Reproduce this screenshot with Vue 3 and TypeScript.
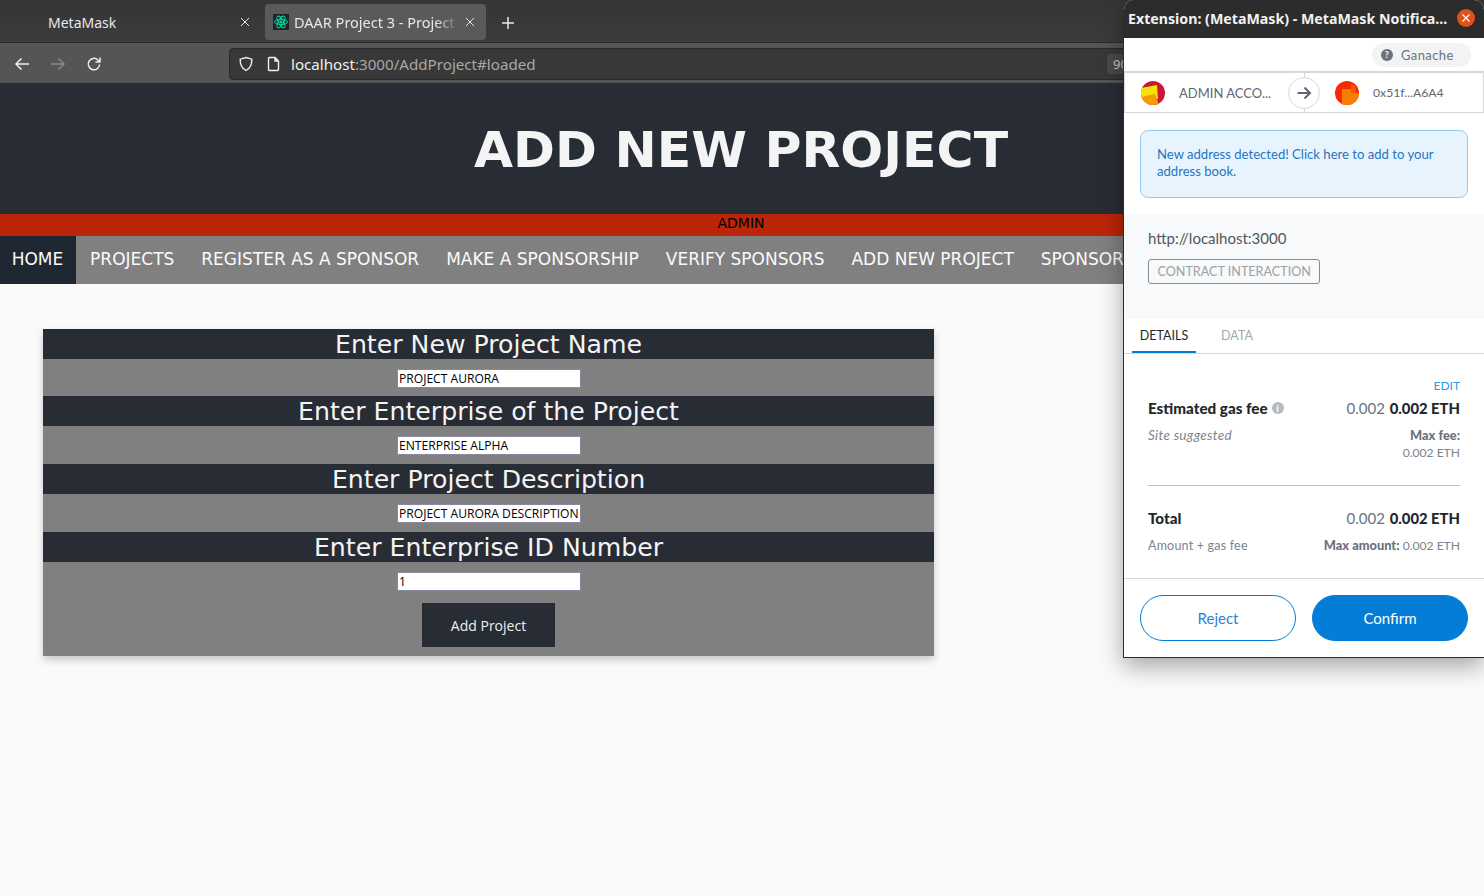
<template>
  <div class="screen">
    <div class="tabbar">
      <div class="tab">
        <span class="tab-title">MetaMask</span>
        <svg class="tab-x" width="10" height="10" viewBox="0 0 10 10"><path d="M1 1l8 8M9 1l-8 8" /></svg>
      </div>
      <div class="tab active">
        <svg class="favicon" width="16" height="16" viewBox="0 0 16 16">
          <rect width="16" height="16" fill="#20232a" />
          <g fill="none" stroke="#00d8a0" stroke-width="1">
            <ellipse cx="8" cy="8" rx="6.5" ry="2.6" />
            <ellipse cx="8" cy="8" rx="6.5" ry="2.6" transform="rotate(60 8 8)" />
            <ellipse cx="8" cy="8" rx="6.5" ry="2.6" transform="rotate(120 8 8)" />
          </g>
          <circle cx="8" cy="8" r="1.6" fill="#00d8a0" />
        </svg>
        <span class="tab-title fade">DAAR Project 3 - Project S</span>
        <svg class="tab-x" width="10" height="10" viewBox="0 0 10 10"><path d="M1 1l8 8M9 1l-8 8" /></svg>
      </div>
      <svg class="new-tab" width="12" height="12" viewBox="0 0 12 12"><path d="M6 0v12M0 6h12" /></svg>
    </div>

    <div class="toolbar">
      <svg class="nav-icon" width="16" height="16" viewBox="0 0 16 16"><path d="M15 8H2M7.500 2.500L2 8l5.500 5.500" /></svg>
      <svg class="nav-icon dim" width="16" height="16" viewBox="0 0 16 16"><path d="M1 8h13M8.500 2.500L14 8l-5.500 5.500" /></svg>
      <svg class="nav-icon" width="16" height="16" viewBox="0 0 16 16"><path d="M13.600 8.500a5.700 5.700 0 1 1-1.700-4.500L14 6M14 1.500V6H9.500" /></svg>
      <div class="urlbar">
        <svg class="url-icon" width="16" height="16" viewBox="0 0 16 16"><path d="M8 1.500l5.800 1.700c.2 5-1.500 9-5.800 11.300C3.700 12.200 2 8.200 2.200 3.200z" /></svg>
        <svg class="url-icon page-icon" width="14" height="16" viewBox="0 0 14 16"><path d="M2.500 1.500h5.500l3.500 3.500v8.500a1 1 0 0 1-1 1h-8a1 1 0 0 1-1-1v-11a1 1 0 0 1 1-1zM8 1.500V5h3.500" /></svg>
        <span class="url"><b>localhost</b>:3000/AddProject#loaded</span>
        <span class="zoom-chip">90%</span>
      </div>
    </div>

    <header class="hero">
      <h1>ADD NEW PROJECT</h1>
    </header>
    <div class="role">ADMIN</div>
    <nav class="menu">
      <a v-for="(item, i) in menu" :key="item" :class="{ current: i === 0 }">{{ item }}</a>
    </nav>

    <main class="page">
      <form class="card" @submit.prevent>
        <template v-for="f in fields" :key="f.label">
          <h2>{{ f.label }}</h2>
          <div class="field">
            <input type="text" :value="f.value" />
          </div>
        </template>
        <div class="actions">
          <button type="button">Add Project</button>
        </div>
      </form>
    </main>

    <aside class="popup">
      <div class="popup-title">
        <span>Extension: (MetaMask) - MetaMask Notifica...</span>
        <span class="close">
          <svg width="8" height="8" viewBox="0 0 8 8"><path d="M.5.5l7 7M7.500.5l-7 7" /></svg>
        </span>
      </div>
      <div class="popup-body">
        <div class="net-row">
          <div class="net">
            <svg width="12" height="12" viewBox="0 0 12 12"><circle cx="6" cy="6" r="6" fill="#6a737d" /><text x="6" y="9.200" text-anchor="middle" font-size="9" font-weight="700" fill="#fff" font-family="Lato, sans-serif">?</text></svg>
            <span>Ganache</span>
          </div>
        </div>
        <div class="accounts">
          <div class="acct from">
            <svg class="identicon" width="24" height="24" viewBox="0 0 24 24">
              <clipPath id="ic1"><circle cx="12" cy="12" r="12" /></clipPath>
              <g clip-path="url(#ic1)">
                <rect width="24" height="24" fill="#c9183a" />
                <path d="M0 7l16-3 1 14L0 16z" fill="#f5e400" />
                <path d="M0 16l14-3 4 11H0z" fill="#f79a00" />
              </g>
            </svg>
            <span>ADMIN ACCO...</span>
          </div>
          <div class="arrow">
            <svg width="16" height="16" viewBox="0 0 16 16"><path d="M1.500 8h12.500M8.500 2.500L14 8l-5.500 5.500" /></svg>
          </div>
          <div class="acct to">
            <svg class="identicon" width="24" height="24" viewBox="0 0 24 24">
              <clipPath id="ic2"><circle cx="12" cy="12" r="12" /></clipPath>
              <g clip-path="url(#ic2)">
                <rect width="24" height="24" fill="#fa2a00" />
                <path d="M7 8h9v4h8v12H7z" fill="#f57f00" />
                <path d="M16 3l5 2v7h-5z" fill="#f9560a" />
              </g>
            </svg>
            <span>0x51f...A6A4</span>
          </div>
        </div>
        <div class="notice-wrap">
          <div class="notice">New address detected! Click here to add to your address book.</div>
        </div>
        <div class="origin">
          <div class="origin-url">http://localhost:3000</div>
          <span class="tag">CONTRACT INTERACTION</span>
        </div>
        <div class="tabs">
          <span class="tx-tab on">DETAILS</span>
          <span class="tx-tab">DATA</span>
        </div>
        <div class="details">
          <div class="edit">EDIT</div>
          <div class="row">
            <span class="strong">Estimated gas fee <i class="info">i</i></span>
            <span class="amount">0.002 <b>0.002 ETH</b></span>
          </div>
          <div class="row sub gas-sub">
            <em>Site suggested</em>
            <span class="stack"><b>Max fee:</b><br />0.002 ETH</span>
          </div>
          <div class="rule"></div>
          <div class="row">
            <span class="strong">Total</span>
            <span class="amount">0.002 <b>0.002 ETH</b></span>
          </div>
          <div class="row sub total-sub">
            <span class="wide">Amount + gas fee</span>
            <span><b>Max amount:</b> 0.002 ETH</span>
          </div>
        </div>
        <div class="footer">
          <button class="btn ghost" type="button">Reject</button>
          <button class="btn solid" type="button">Confirm</button>
        </div>
      </div>
    </aside>
  </div>
</template>

<script setup lang="ts">
const menu: string[] = [
  'HOME',
  'PROJECTS',
  'REGISTER AS A SPONSOR',
  'MAKE A SPONSORSHIP',
  'VERIFY SPONSORS',
  'ADD NEW PROJECT',
  'SPONSORS'
]

interface Field {
  label: string
  value: string
}

const fields: Field[] = [
  { label: 'Enter New Project Name', value: 'PROJECT AURORA' },
  { label: 'Enter Enterprise of the Project', value: 'ENTERPRISE ALPHA' },
  { label: 'Enter Project Description', value: 'PROJECT AURORA DESCRIPTION' },
  { label: 'Enter Enterprise ID Number', value: '1' }
]
</script>

<style>
html,
body {
  margin: 0;
  overflow: hidden;
  background: #fafafa;
}
</style>

<style scoped>
.screen {
  position: relative;
  width: 1484px;
  height: 896px;
  overflow: hidden;
  background: #fafafa;
  font-family: "DejaVu Sans", sans-serif;
}

/* browser chrome */
.tabbar {
  height: 43px;
  box-sizing: border-box;
  padding: 4px 0 0 9px;
  display: flex;
  align-items: flex-start;
  background: linear-gradient(#353535, #3c3c3c);
  border-bottom: 1px solid #2a2a2a;
  font-family: "Noto Sans", sans-serif;
  color: #e8e8e8;
  font-size: 14px;
}

.tab {
  width: 256px;
  height: 36px;
  box-sizing: border-box;
  padding: 0 15px 0 39px;
  display: flex;
  align-items: center;
  justify-content: space-between;
}

.tab.active {
  width: 221px;
  padding: 0 11px 0 8px;
  background: #5a5a5a;
  border-radius: 4px;
  gap: 5px;
  font-size: 14.500px;
}

.tab-title {
  white-space: nowrap;
  overflow: hidden;
}

.tab-title.fade {
  flex: 1;
  -webkit-mask-image: linear-gradient(90deg, #000 85%, transparent);
  mask-image: linear-gradient(90deg, #000 85%, transparent);
}

.favicon {
  flex: none;
}

.tab-x,
.new-tab {
  flex: none;
  fill: none;
  stroke: #e8e8e8;
  stroke-width: 1;
}

.new-tab {
  margin: 13px 0 0 16px;
  stroke-width: 1.5;
}

.toolbar {
  height: 41px;
  box-sizing: border-box;
  padding: 1px 0 0 14px;
  display: flex;
  align-items: center;
  gap: 20px;
  background: #555;
  border-bottom: 1px solid #2c2c2c;
}

.nav-icon {
  flex: none;
  fill: none;
  stroke: #f0f0f0;
  stroke-width: 1.5;
}

.nav-icon.dim {
  stroke: #8a8a8a;
}

.urlbar {
  flex: none;
  width: 1260px;
  height: 32px;
  margin-left: 107px;
  box-sizing: border-box;
  padding: 0 0 0 8px;
  display: flex;
  align-items: center;
  gap: 8px;
  background: #383838;
  border: 1px solid #2a2a2a;
  border-radius: 4px;
  font-family: "Noto Sans", sans-serif;
  font-size: 15.150px;
  color: #a8a8a8;
}

.url-icon {
  flex: none;
  fill: none;
  stroke: #f0f0f0;
  stroke-width: 1.4;
}

.page-icon {
  margin-left: 5px;
}

.url {
  margin-left: 2px;
  flex: 1;
}

.url b {
  font-weight: 400;
  color: #f0f0f0;
}

.zoom-chip {
  position: absolute;
  left: 1107px;
  top: 54px;
  height: 20px;
  padding: 0 6px;
  line-height: 20px;
  font-size: 13px;
  border-radius: 3px;
  background: #4a4a4a;
  color: #c8c8c8;
}

/* dapp page */
.hero {
  height: 130px;
  box-sizing: border-box;
  padding-right: 2px;
  display: flex;
  align-items: center;
  justify-content: center;
  background: #282c34;
}

.hero h1 {
  margin: 0;
  color: #f4f4f4;
  font-size: 50.500px;
  font-weight: 700;
}

.role {
  height: 22px;
  padding-right: 2px;
  line-height: 18px;
  text-align: center;
  font-size: 14px;
  background: #bb2509;
  color: #000;
}

.menu {
  height: 48px;
  display: flex;
  background: #808080;
  white-space: nowrap;
}

.menu a {
  padding: 0 13.500px;
  line-height: 47px;
  font-size: 17px;
  color: #fafafa;
}

.menu a:first-child {
  padding: 0 12.500px 0 11.700px;
  margin-right: 0.800px;
}

.menu a.current {
  background: #1f2732;
}

.page {
  padding: 45px 0 0 43px;
}

.card {
  width: 891px;
  background: #808080;
  box-shadow: 0 4px 8px rgba(0, 0, 0, 0.2);
  text-align: center;
}

.card h2 {
  margin: 0;
  height: 30px;
  line-height: 32px;
  font-size: 25.200px;
  font-weight: 400;
  color: #f4f4f4;
  background: #282c34;
}

.field {
  height: 38px;
  display: flex;
  justify-content: center;
  padding-top: 10px;
  box-sizing: border-box;
}

.card h2:first-child + .field {
  height: 37px;
}

.field input {
  width: 184px;
  height: 18.600px;
  box-sizing: border-box;
  padding: 1px 1px 0 1.500px;
  font-family: "Open Sans", sans-serif;
  font-size: 12.100px;
  color: #000;
  background: #fff;
  border: 1px solid #8a88a0;
  border-radius: 1px;
  outline: none;
}

.actions {
  display: flex;
  justify-content: center;
  padding: 3px 0 9px;
}

.actions button {
  width: 133px;
  height: 44px;
  border: none;
  background: #282c34;
  color: #f0f0f0;
  font-family: "Open Sans", sans-serif;
  font-size: 14px;
}

/* metamask popup */
.popup {
  position: absolute;
  left: 1123px;
  top: 0;
  width: 361px;
  height: 658px;
  box-sizing: border-box;
  display: flex;
  flex-direction: column;
  border-radius: 10px 10px 0 0;
  background: #fff;
  border-left: 1px solid #2c2c2c;
  border-bottom: 1px solid #2c2c2c;
  box-shadow: 0 8px 24px rgba(0, 0, 0, 0.35);
  overflow: hidden;
  font-family: "Lato", sans-serif;
  color: #24272a;
}

.popup-title {
  flex: none;
  height: 38px;
  box-sizing: border-box;
  padding: 0 9px 2px 4px;
  display: flex;
  align-items: center;
  justify-content: space-between;
  background: #2c2c2c;
  color: #f2f2f2;
  font-family: "Noto Sans", sans-serif;
  font-size: 14.200px;
  font-weight: 700;
  white-space: nowrap;
}

.close {
  width: 18px;
  height: 18px;
  display: flex;
  align-items: center;
  justify-content: center;
  border-radius: 50%;
  background: #e2501c;
}

.close svg {
  fill: none;
  stroke: #fff;
  stroke-width: 1.2;
}

.popup-body {
  flex: 1;
  display: flex;
  flex-direction: column;
}

.net-row {
  height: 33px;
  display: flex;
  justify-content: flex-end;
  align-items: center;
  padding-right: 13px;
}

.net {
  height: 24px;
  width: 99px;
  box-sizing: border-box;
  padding-left: 9px;
  display: flex;
  align-items: center;
  gap: 8px;
  border-radius: 12px;
  background: #f2f3f4;
  font-size: 13px;
  letter-spacing: 0.4px;
  color: #6a737d;
}

.accounts {
  position: relative;
  height: 42px;
  display: flex;
  align-items: center;
  box-sizing: border-box;
  border: 1px solid #d6d9dc;
  border-top-width: 2px;
  font-size: 13px;
  color: #5f6770;
  white-space: nowrap;
}

.accounts::before {
  content: "";
  position: absolute;
  left: 179px;
  top: 0;
  bottom: 0;
  width: 1px;
  background: #d6d9dc;
}

.acct {
  display: flex;
  align-items: center;
  gap: 14px;
  box-sizing: border-box;
}

.acct.from {
  padding-left: 16px;
  width: 146px;
}

.acct.to {
  padding-left: 15px;
  gap: 14px;
  font-size: 12.200px;
}

.identicon {
  flex: none;
}

.arrow {
  position: relative;
  flex: none;
  width: 32px;
  height: 32px;
  margin-left: 17px;
  box-sizing: border-box;
  display: flex;
  align-items: center;
  justify-content: center;
  border: 1px solid #d6d9dc;
  border-radius: 50%;
  background: #fff;
}

.arrow svg {
  fill: none;
  stroke: #5f6770;
  stroke-width: 2;
}

.notice-wrap {
  height: 101px;
  box-sizing: border-box;
  padding: 17px 16px 0;
}

.notice {
  height: 68px;
  box-sizing: border-box;
  padding: 15px 16px;
  background: #e8f4fd;
  border: 1px solid #8dcbf8;
  border-radius: 8px;
  font-size: 13.100px;
  line-height: 17px;
  color: #1f75bf;
}

.origin {
  height: 105px;
  box-sizing: border-box;
  padding: 14px 24px 0;
  background: #f7f9fa;
}

.origin-url {
  font-size: 15px;
  line-height: 20px;
  color: #50575e;
}

.tag {
  display: inline-block;
  margin-top: 11px;
  height: 25px;
  line-height: 23px;
  box-sizing: border-box;
  padding: 0 8.500px;
  border: 1px solid #858b92;
  border-radius: 3px;
  font-size: 12.600px;
  color: #9ca1a6;
}

.tabs {
  height: 35px;
  flex: none;
  box-sizing: border-box;
  padding-left: 8px;
  display: flex;
  gap: 9px;
  border-bottom: 1px solid #d6d9dc;
}

.tx-tab {
  width: 64px;
  height: 34px;
  box-sizing: border-box;
  padding-top: 9px;
  text-align: center;
  font-size: 12.500px;
  color: #a3a8ad;
}

.tx-tab.on {
  color: #24272a;
  border-bottom: 2px solid #037dd6;
}

.details {
  height: 225px;
  flex: none;
  box-sizing: border-box;
  padding: 24px 24px 0;
  border-bottom: 1px solid #d6d9dc;
}

.edit {
  margin-bottom: 5px;
  text-align: right;
  font-size: 12px;
  line-height: 16px;
  color: #2f9ae8;
}

.row {
  display: flex;
  justify-content: space-between;
  align-items: flex-start;
  font-size: 15.200px;
}

.strong {
  font-weight: 900;
  display: flex;
  align-items: center;
  gap: 4px;
  color: #24272a;
}

.info {
  width: 12px;
  height: 12px;
  line-height: 12px;
  border-radius: 50%;
  background: #b4bac0;
  color: #fff;
  font-style: normal;
  font-size: 10px;
  text-align: center;
}

.amount {
  font-size: 15px;
  color: #6a737d;
}

.amount b {
  margin-left: 1px;
  font-size: 14.800px;
  font-weight: 900;
  color: #24272a;
}

.sub {
  font-size: 12.100px;
  line-height: 17px;
  color: #7c848c;
}

.sub b {
  font-size: 12.800px;
  font-weight: 900;
  color: #6a737d;
}

.sub em {
  font-size: 13.500px;
  letter-spacing: 0.3px;
}

.wide {
  font-size: 12.500px;
  letter-spacing: 0.2px;
}

.gas-sub {
  margin-top: 10px;
}

.stack {
  text-align: right;
}

.rule {
  height: 1px;
  margin: 24px 0 23px;
  background: #bbc0c5;
}

.total-sub {
  margin-top: 10px;
}

.footer {
  flex: 1;
  padding: 16px 16px 0;
  display: flex;
  align-items: flex-start;
  gap: 16px;
}

.btn {
  flex: 1;
  height: 46px;
  box-sizing: border-box;
  border-radius: 23px;
  font-family: "Lato", sans-serif;
  font-size: 15px;
}

.btn.ghost {
  background: #fff;
  border: 1px solid #037dd6;
  color: #2f80d8;
}

.btn.solid {
  background: #037dd6;
  border: 1px solid #037dd6;
  color: #fff;
}
</style>
